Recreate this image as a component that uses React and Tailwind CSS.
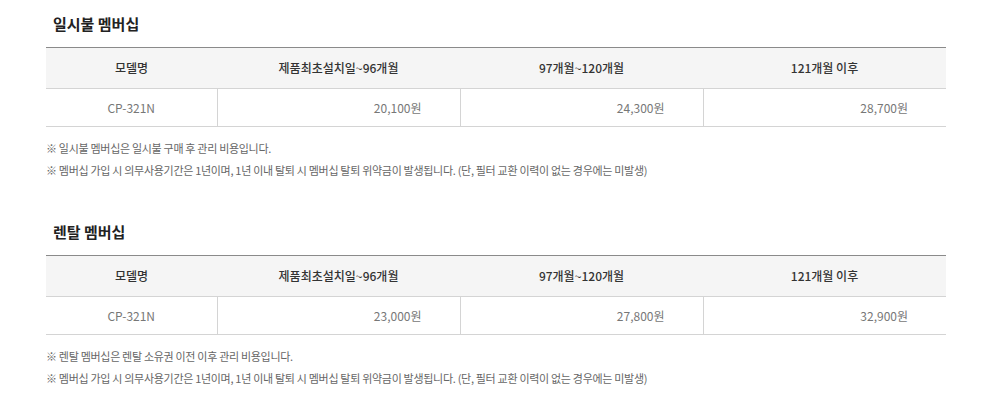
const cols = ["모델명", "제품최초설치일~96개월", "97개월~120개월", "121개월 이후"];

const sections = [
  {
    title: "일시불 멤버십",
    prices: ["20,100원", "24,300원", "28,700원"],
    notes: [
      "※ 일시불 멤버십은 일시불 구매 후 관리 비용입니다.",
      "※ 멤버십 가입 시 의무사용기간은 1년이며, 1년 이내 탈퇴 시 멤버십 탈퇴 위약금이 발생됩니다. (단, 필터 교환 이력이 없는 경우에는 미발생)",
    ],
  },
  {
    title: "렌탈 멤버십",
    prices: ["23,000원", "27,800원", "32,900원"],
    notes: [
      "※ 렌탈 멤버십은 렌탈 소유권 이전 이후 관리 비용입니다.",
      "※ 멤버십 가입 시 의무사용기간은 1년이며, 1년 이내 탈퇴 시 멤버십 탈퇴 위약금이 발생됩니다. (단, 필터 교환 이력이 없는 경우에는 미발생)",
    ],
  },
];

function PriceTable({ prices }) {
  return (
    <table className="w-full border-collapse table-fixed text-[12px]">
      <colgroup>
        <col className="w-[171px]" />
        <col className="w-[243px]" />
        <col className="w-[243px]" />
        <col />
      </colgroup>
      <thead>
        <tr className="bg-[#f5f5f5] border-t border-[#8a8a8a] border-b border-b-[#d4d4d4]">
          {cols.map((c) => (
            <th key={c} className="h-[41px] font-medium text-[#333] text-center">
              {c}
            </th>
          ))}
        </tr>
      </thead>
      <tbody>
        <tr className="border-b border-[#d4d4d4]">
          <td className="h-[38px] text-center text-[#777]">CP-321N</td>
          {prices.map((p) => (
            <td key={p} className="h-[38px] text-right pr-[38px] text-[#777] border-l border-[#d4d4d4]">
              {p}
            </td>
          ))}
        </tr>
      </tbody>
    </table>
  );
}

export default function App() {
  return (
    <div
      className="w-[999px] h-[403px] bg-white overflow-hidden pl-[46px] pr-[53px] pt-[14px]"
      style={{ fontFamily: '"Noto Sans CJK KR", "Noto Sans", sans-serif' }}
    >
      {sections.map((s, i) => (
        <section key={s.title} className={i === 0 ? "" : "mt-[41px]"}>
          <h3 className="pl-[7px] text-[15px] font-bold text-[#222] leading-[20px] mb-[13px]">
            {s.title}
          </h3>
          <PriceTable prices={s.prices} />
          <div className="mt-[10px] text-[11px] tracking-[-0.3px] text-[#666] leading-[22px]">
            {s.notes.map((n) => (
              <p key={n}>{n}</p>
            ))}
          </div>
        </section>
      ))}
    </div>
  );
}
